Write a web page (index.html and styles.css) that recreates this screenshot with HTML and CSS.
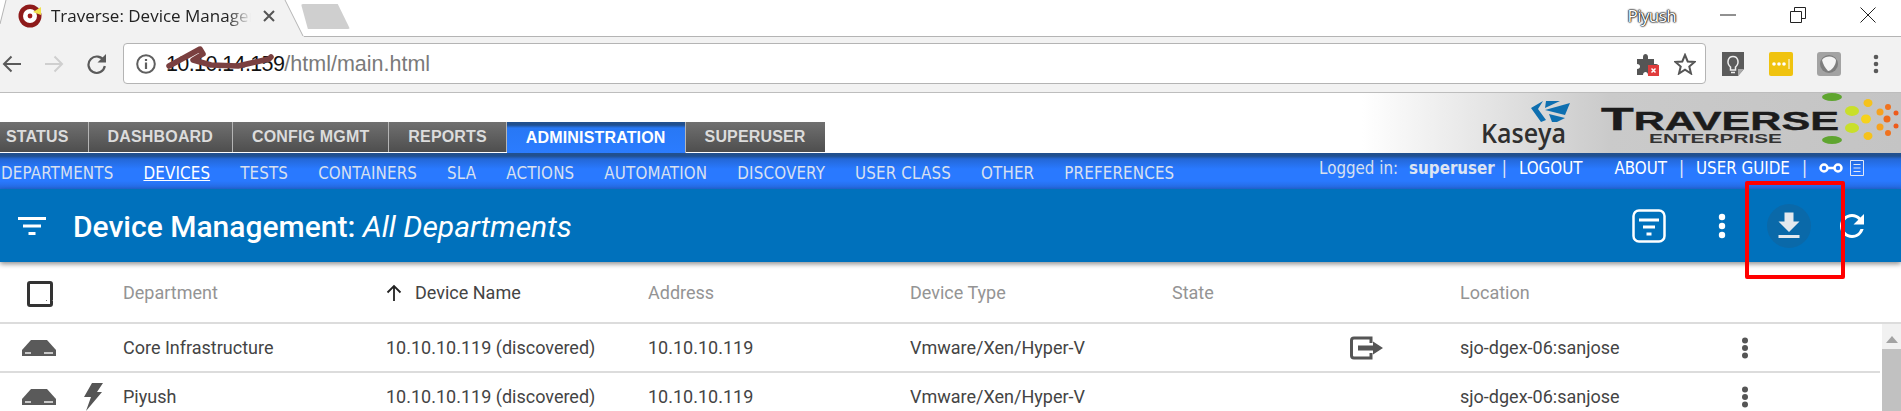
FILE: index.html
```html
<!DOCTYPE html>
<html lang="en">
<head>
<meta charset="utf-8">
<title>Traverse: Device Management</title>
<link rel="stylesheet" href="styles.css">
</head>
<body>
<div class="tabstrip">
  <div class="tab">
    <svg class="tab-shape" width="304" height="37" viewBox="0 0 304 37"><path d="M6 0L0 24V37H304L285 0Z" fill="#f2f2f2"/><path d="M6 0L0 24M285 0L303 36" stroke="#b4b4b4" fill="none"/></svg>
    <svg class="favicon" width="24" height="24" viewBox="0 0 24 24"><circle cx="12" cy="12" r="11.500" fill="#8e1a1a"/><circle cx="12" cy="12" r="7" fill="#fff"/><circle cx="12" cy="12" r="2.400" fill="#a01c1c"/><path d="M15 8L23 3V11Z" fill="#f1e14b"/></svg>
    <span class="tab-title">Traverse: Device Manager</span>
    <svg class="tab-close" width="12" height="12" viewBox="0 0 12 12"><path d="M1 1L11 11M11 1L1 11" stroke="#555" stroke-width="2"/></svg>
  </div>
  <div class="newtab"></div>
  <span class="profile">Piyush</span>
  <div class="winbtn"><svg width="16" height="2" viewBox="0 0 16 2"><path d="M0 1H16" stroke="#222"/></svg></div>
  <div class="winbtn"><svg width="16" height="16" viewBox="0 0 16 16"><path d="M.5 4.500H11.500V15.500H.5ZM4.500 4.500V.5H15.500V11.500H11.500" fill="none" stroke="#222"/></svg></div>
  <div class="winbtn"><svg width="16" height="16" viewBox="0 0 16 16"><path d="M.5 .5L15.500 15.500M15.500 .5L.5 15.500" stroke="#222"/></svg></div>
</div>
<div class="toolbar">
  <svg class="nav-back" width="20" height="18" viewBox="0 0 20 18"><path d="M19 9H2M9.500 1.500L2 9L9.500 16.500" fill="none" stroke="#5a5a5a" stroke-width="2"/></svg>
  <svg class="nav-forward" width="20" height="18" viewBox="0 0 20 18"><path d="M1 9H18M10.500 1.500L18 9L10.500 16.500" fill="none" stroke="#cfcfcf" stroke-width="2"/></svg>
  <svg class="nav-reload" width="21" height="22" viewBox="0 0 21 22"><path d="M18 8A8.200 8.200 0 1 0 18.800 13" fill="none" stroke="#5a5a5a" stroke-width="2.200"/><path d="M20 1V9.500H11.500Z" fill="#5a5a5a"/></svg>
  <div class="omnibox">
    <svg class="info" width="20" height="20" viewBox="0 0 20 20"><circle cx="10" cy="10" r="8.800" fill="none" stroke="#5f5f5f" stroke-width="2"/><path d="M10 8.500V15M10 5V7" stroke="#5f5f5f" stroke-width="2.200"/></svg>
    <span class="url-host">10.10.14.159</span><span class="url-path">/html/main.html</span>
    <svg class="puzzle" width="24" height="24" viewBox="0 0 24 24"><path d="M1 7H7V5C7 1 12 1 12 5V7H18V12H20C23.500 12 23.500 17 20 17H18V23H12C12 19 7 19 7 23H1V17C5 17 5 12 1 12Z" fill="#555"/><rect x="12" y="13" width="11" height="11" fill="#e03c3c"/><path d="M15.500 16.500L19.500 20.500M19.500 16.500L15.500 20.500" stroke="#fff" stroke-width="1.500"/></svg>
    <svg class="star" width="22" height="22" viewBox="0 0 22 22"><path d="M11 2L13.700 8.500L20.500 9L15.300 13.500L17 20.500L11 16.700L5 20.500L6.700 13.500L1.500 9L8.300 8.500Z" fill="none" stroke="#555" stroke-width="2"/></svg>
  </div>
  <svg class="ext ext-first" width="24" height="24" viewBox="0 0 24 24"><path d="M1 0H23V17L17 24H1Z" fill="#5b5b5b"/><path d="M17 24V17H23Z" fill="#aaa"/><path d="M9.500 15C5 11 7 4.500 12 4.500S19 11 14.500 15V18H9.500Z" fill="none" stroke="#eee" stroke-width="1.500"/><path d="M10 20.500H14" stroke="#eee" stroke-width="1.500"/></svg>
  <svg class="ext" width="24" height="24" viewBox="0 0 24 24"><rect width="24" height="24" rx="2" fill="#f0c30f"/><circle cx="5" cy="12" r="1.800" fill="#fff"/><circle cx="10" cy="12" r="1.800" fill="#fff"/><circle cx="15" cy="12" r="1.800" fill="#fff"/><path d="M20 7V17" stroke="#fff"/></svg>
  <svg class="ext" width="24" height="24" viewBox="0 0 24 24"><rect width="24" height="24" rx="3" fill="#a3a3a3"/><circle cx="12" cy="12" r="9" fill="#7e7e7e"/><path d="M5 8C9 3 17 4 19 8C19 14 14 19 11 19C8 16 6 12 5 8Z" fill="#f4f4f4"/></svg>
  <svg class="menu-dots" width="12" height="20" viewBox="0 0 12 20"><circle cx="6" cy="3" r="2.300" fill="#5a5a5a"/><circle cx="6" cy="10" r="2.300" fill="#5a5a5a"/><circle cx="6" cy="17" r="2.300" fill="#5a5a5a"/></svg>
</div>
<div class="masthead">
  <nav class="maintabs">
    <a class="maintab maintab-first">STATUS</a>
    <a class="maintab">DASHBOARD</a>
    <a class="maintab">CONFIG MGMT</a>
    <a class="maintab">REPORTS</a>
    <a class="maintab maintab-active">ADMINISTRATION</a>
    <a class="maintab">SUPERUSER</a>
  </nav>
  <div class="brand">
    <svg width="539" height="60" viewBox="0 0 539 60">
      <path d="M169 15L181 8L176 16L184 27L179 29Z" fill="#0e6fb0"/>
      <path d="M183 17L208 10L203 22L187 18Z" fill="#0e6fb0"/>
      <path d="M187 21L203 25L195 29H190Z" fill="#0e6fb0"/>
      <path d="M184 8H198L183 15Z" fill="#0e6fb0"/>
      <text class="kaseya" x="119" y="50" textLength="85" lengthAdjust="spacingAndGlyphs">Kaseya</text>
      <text class="traverse" x="239" y="37" textLength="238" lengthAdjust="spacingAndGlyphs"><tspan class="traverse-big">T</tspan>RAVERSE</text>
      <text class="enterprise" x="287" y="50" textLength="133" lengthAdjust="spacingAndGlyphs">ENTERPRISE</text>
      <ellipse cx="470" cy="4" rx="10" ry="4" fill="#5fa52f"/>
      <ellipse cx="470" cy="47" rx="10" ry="4" fill="#5fa52f"/>
      <ellipse cx="490" cy="18" rx="7" ry="5" fill="#c9df2a"/>
      <ellipse cx="490" cy="35" rx="7" ry="5" fill="#c9df2a"/>
      <ellipse cx="506" cy="10" rx="4.500" ry="4" fill="#f5c21c"/>
      <ellipse cx="504" cy="26" rx="5" ry="4.500" fill="#f5d21c"/>
      <ellipse cx="506" cy="43" rx="4.500" ry="4" fill="#f5c21c"/>
      <circle cx="518" cy="19" r="3.500" fill="#f6a21e"/>
      <circle cx="518" cy="34" r="3.500" fill="#f6a21e"/>
      <circle cx="526" cy="14" r="3" fill="#f0721e"/>
      <circle cx="525" cy="26" r="3.500" fill="#ee6a1a"/>
      <circle cx="526" cy="40" r="3" fill="#f0721e"/>
      <circle cx="534" cy="20" r="2.500" fill="#ee5a1a"/>
      <circle cx="534" cy="33" r="2.500" fill="#ee5a1a"/>
    </svg>
  </div>
</div>
<div class="subnav">
  <a class="sublink">DEPARTMENTS</a>
  <a class="sublink sublink-current">DEVICES</a>
  <a class="sublink">TESTS</a>
  <a class="sublink">CONTAINERS</a>
  <a class="sublink">SLA</a>
  <a class="sublink">ACTIONS</a>
  <a class="sublink">AUTOMATION</a>
  <a class="sublink">DISCOVERY</a>
  <a class="sublink">USER CLASS</a>
  <a class="sublink">OTHER</a>
  <a class="sublink">PREFERENCES</a>
  <div class="userinfo">
    <span class="logged">Logged in:</span>
    <b class="logged-user">superuser</b>
    <span class="pipe pipe-a">|</span>
    <a class="userlink logout">LOGOUT</a>
    <a class="userlink about">ABOUT</a>
    <span class="pipe pipe-b">|</span>
    <a class="userlink">USER GUIDE</a>
    <span class="pipe pipe-c">|</span>
    <svg class="license" width="26" height="12" viewBox="0 0 26 12"><circle cx="6" cy="6" r="3.500" fill="none" stroke="#fff" stroke-width="2.500"/><circle cx="20" cy="6" r="3.500" fill="none" stroke="#fff" stroke-width="2.500"/><path d="M9 6H17" stroke="#fff" stroke-width="2.500"/></svg>
    <svg class="docicon" width="14" height="16" viewBox="0 0 14 16"><path d="M.5 .5H13.500V15.500H.5ZM3.500 4.500H10.500M3.500 8H10.500M3.500 11.500H10.500" fill="none" stroke="#e2e8f5"/></svg>
  </div>
</div>
<header class="titlebar">
  <svg class="filter-icon" width="28" height="18" viewBox="0 0 28 18"><path d="M0 1.500H28M5 9H23M10.500 16.500H17.500" stroke="#fff" stroke-width="3"/></svg>
  <h1 class="title">Device Management: <em class="title-scope">All Departments</em></h1>
  <div class="actions">
    <svg class="act-box" width="34" height="34" viewBox="0 0 34 34"><rect x="1.500" y="1.500" width="31" height="31" rx="5.500" fill="none" stroke="#fff" stroke-width="2.500"/><path d="M7 11H27M11 18H23M14.500 25H19.500" stroke="#fff" stroke-width="3"/></svg>
    <svg class="act-dots" width="8" height="26" viewBox="0 0 8 26"><circle cx="4" cy="4" r="3.200" fill="#fff"/><circle cx="4" cy="13" r="3.200" fill="#fff"/><circle cx="4" cy="22" r="3.200" fill="#fff"/></svg>
    <div class="act-download"><svg width="36" height="36" viewBox="0 0 24 24"><path d="M19 9h-4V3H9v6H5l7 7 7-7zM5 18v2h14v-2H5z" fill="#e4e9ee"/></svg></div>
    <svg class="act-refresh" width="36" height="36" viewBox="0 0 24 24"><path d="M17.650 6.350A7.958 7.958 0 0 0 12 4c-4.420 0-7.990 3.580-7.990 8s3.570 8 7.990 8c3.730 0 6.840-2.550 7.730-6h-2.080A5.990 5.990 0 0 1 12 18c-3.310 0-6-2.690-6-6s2.690-6 6-6c1.660 0 3.140.69 4.220 1.780L13 11h7V4l-2.350 2.350z" fill="#fff"/></svg>
  </div>
</header>
<div class="grid-head">
  <div class="cell-check"><span class="checkbox"></span></div>
  <div class="col-h">Department</div>
  <div class="col-h col-sorted"><svg class="sort" width="16" height="18" viewBox="0 0 16 18"><path d="M8 17V2M1.500 8.500L8 2L14.500 8.500" fill="none" stroke="#222" stroke-width="1.800"/></svg>Device Name</div>
  <div class="col-h">Address</div>
  <div class="col-h">Device Type</div>
  <div class="col-h">State</div>
  <div></div>
  <div class="col-h">Location</div>
  <div></div>
</div>
<div class="grid-body">
  <div class="rows">
    <div class="row">
      <div class="cell-icons"><svg width="34" height="16" viewBox="0 0 34 16"><path d="M9 0H25L34 10V16H0V10Z" fill="#5a5a5a"/><path d="M3 13H9M22 13H31" stroke="#eee" stroke-width="1.500"/></svg></div>
      <div>Core Infrastructure</div>
      <div>10.10.10.119 (discovered)</div>
      <div>10.10.10.119</div>
      <div>Vmware/Xen/Hyper-V</div>
      <div></div>
      <div><svg class="export" width="33" height="24" viewBox="0 0 33 24"><path d="M21 7V2H4Q1.500 2 1.500 4.500V19.500Q1.500 22 4 22H21V17" fill="none" stroke="#555" stroke-width="3"/><path d="M8 9.500H23V5.500L33 12L23 18.500V14.500H8Z" fill="#555"/></svg></div>
      <div>sjo-dgex-06:sanjose</div>
      <div><svg class="kebab" width="8" height="22" viewBox="0 0 8 22"><circle cx="4" cy="3.500" r="3" fill="#555"/><circle cx="4" cy="11" r="3" fill="#555"/><circle cx="4" cy="18.500" r="3" fill="#555"/></svg></div>
    </div>
    <div class="row">
      <div class="cell-icons"><svg width="34" height="16" viewBox="0 0 34 16"><path d="M9 0H25L34 10V16H0V10Z" fill="#5a5a5a"/><path d="M3 13H9M22 13H31" stroke="#eee" stroke-width="1.500"/></svg><svg class="bolt" width="19" height="28" viewBox="0 0 19 28"><path d="M8 0H19L13 9H18L2 28L7 14H0Z" fill="#555"/></svg></div>
      <div>Piyush</div>
      <div>10.10.10.119 (discovered)</div>
      <div>10.10.10.119</div>
      <div>Vmware/Xen/Hyper-V</div>
      <div></div>
      <div></div>
      <div>sjo-dgex-06:sanjose</div>
      <div><svg class="kebab" width="8" height="22" viewBox="0 0 8 22"><circle cx="4" cy="3.500" r="3" fill="#555"/><circle cx="4" cy="11" r="3" fill="#555"/><circle cx="4" cy="18.500" r="3" fill="#555"/></svg></div>
    </div>
  </div>
  <div class="scrollbar">
    <div class="scroll-up"></div>
    <div class="scroll-thumb"></div>
  </div>
</div>
<svg class="scribble" width="120" height="30" viewBox="0 0 120 30"><path d="M6 21L37 4L40 9L30 15L48 20L75 21L106 14L108 12" fill="none" stroke="#7a4040" stroke-width="5.500" stroke-linejoin="round" stroke-linecap="round"/></svg>
<div class="callout"></div>
</body>
</html>
```
FILE: styles.css
```css
* { box-sizing: border-box; }
html, body { margin: 0; padding: 0; }
body {
  width: 1901px;
  height: 411px;
  overflow: hidden;
  position: relative;
  background: #fff;
  font-family: "Roboto", "Liberation Sans", sans-serif;
}

/* browser chrome */
.tabstrip {
  height: 37px;
  display: flex;
  align-items: flex-start;
  background: #fff;
  border-bottom: 1px solid #b4b4b4;
}
.tab {
  position: relative;
  width: 304px;
  height: 37px;
  flex: none;
  display: flex;
  align-items: center;
  padding: 0 0 6px 18px;
}
.tab-shape { position: absolute; left: 0; top: 0; }
.favicon { position: relative; flex: none; }
.tab-title {
  position: relative;
  margin-left: 9px;
  width: 200px;
  flex: none;
  white-space: nowrap;
  overflow: hidden;
  font: 17px "Open Sans", "Liberation Sans", sans-serif;
  color: #222;
  -webkit-mask-image: linear-gradient(90deg, #000 88%, transparent 100%);
  mask-image: linear-gradient(90deg, #000 88%, transparent 100%);
}
.tab-close { position: relative; margin-left: 12px; flex: none; }
.newtab {
  width: 49px;
  height: 25px;
  margin: 4px 0 0 -3px;
  background: #cfcfcf;
  border-radius: 2px;
  clip-path: polygon(0 0, 75% 0, 100% 100%, 14% 100%);
}
.profile {
  margin: 4px 17px 0 auto;
  font: 17px "Open Sans", "Liberation Sans", sans-serif;
  letter-spacing: -0.6px;
  color: #fff;
  text-shadow: 0 0 2px #111, 0 0 2px #111, 0 0 1px #111, 0 0 1px #111;
}
.winbtn {
  width: 70px;
  height: 30px;
  display: flex;
  align-items: center;
  justify-content: center;
  flex: none;
}
.winbtn:last-child { margin-right: -2px; }

.toolbar {
  height: 56px;
  display: flex;
  align-items: center;
  padding: 0 0 2px 2px;
  background: #f2f2f2;
  border-bottom: 1px solid #bdbdbd;
}
.nav-forward, .nav-reload { margin-left: 22px; }
.omnibox {
  width: 1583px;
  height: 41px;
  margin-left: 16px;
  flex: none;
  display: flex;
  align-items: center;
  padding: 0 9px 0 12px;
  background: #fff;
  border: 1px solid #b4b4b4;
  border-radius: 4px;
  font: 21.500px "Liberation Sans", sans-serif;
}
.info { margin-right: 10px; flex: none; }
.url-host { color: #111; letter-spacing: -0.6px; margin-top: 2px; }
.url-path { color: #7a7a7a; margin-top: 2px; }
.puzzle { margin-left: auto; }
.star { margin-left: 14px; }
.ext { margin-left: 24px; flex: none; }
.ext-first { margin-left: 15px; }
.menu-dots { margin-left: 29px; }

/* masthead */
.masthead {
  height: 60px;
  display: flex;
  justify-content: space-between;
  align-items: flex-end;
}
.maintabs { display: flex; align-items: flex-end; }
.maintab {
  height: 30px;
  margin-bottom: 1px;
  padding: 0 19px;
  border-right: 1px solid #b5b5b5;
  display: flex;
  align-items: center;
  background: linear-gradient(#707070, #4e4e4e);
  font: bold 16px "Liberation Sans", sans-serif;
  letter-spacing: .16px;
  color: #dcdcdc;
  white-space: nowrap;
}
.maintab-first { padding-left: 6px; }
.maintab-active {
  height: 31px;
  margin-bottom: 0;
  color: #fff;
  background: linear-gradient(#21508f 0, #21508f 3px, #2878f5 6px, #2b7cff);
}
.maintab:last-child { border-right: 0; }
.brand {
  width: 539px;
  height: 60px;
  background: linear-gradient(90deg, #fff 0, #cacaca 46%, #c4c4c4 100%);
}
.brand svg { display: block; }
.kaseya { font: 600 27px "Open Sans", "Liberation Sans", sans-serif; fill: #2f2f2f; }
.traverse { font: bold 25px "Liberation Sans", sans-serif; fill: #1c1c1c; stroke: #1c1c1c; stroke-width: .4px; }
.traverse-big { font-size: 31px; }
.enterprise { font: bold 13px "Liberation Sans", sans-serif; fill: #333; }

/* sub navigation */
.subnav {
  height: 36px;
  display: flex;
  align-items: center;
  gap: 30px;
  padding: 4px 0 0 1px;
  background: linear-gradient(#21508f 0, #21508f 3px, #2468d8 6px, #2979ff 16px, #2979ff 28px, #2468dc 36px);
  font: 16.800px "DejaVu Sans Condensed", "DejaVu Sans", sans-serif;
  font-stretch: condensed;
  color: #d8e0ef;
  white-space: nowrap;
}
.sublink { letter-spacing: .16px; }
.sublink-current { color: #fff; text-decoration: underline; }
.userinfo {
  margin-left: auto;
  margin-right: 37px;
  margin-top: -10px;
  display: flex;
  align-items: center;
  color: #fff;
}
.logged { color: #d8e0ef; }
.logged-user { margin-left: 11px; color: #dde4f2; }
.pipe { color: #e6ebf6; }
.pipe-a { margin-left: 7px; }
.logout { margin-left: 12px; }
.about { margin-left: 32px; }
.pipe-b { margin: 0 12px; }
.pipe-c { margin: 0 11px 0 12px; }
.docicon { margin-left: 6px; }

/* title bar */
.titlebar {
  position: relative;
  height: 73px;
  display: flex;
  align-items: center;
  padding: 0 31px 0 18px;
  background: #0071bc;
  box-shadow: 0 2px 5px rgba(0, 0, 0, .45);
}
.title {
  margin: 2px 0 0 27px;
  font: 500 30px "Roboto", sans-serif;
  color: #fff;
}
.title-scope { font-weight: 400; font-style: italic; }
.actions { margin-left: auto; display: flex; align-items: center; }
.act-dots { margin-left: 52px; }
.act-download {
  width: 44px;
  height: 44px;
  margin-left: 41px;
  display: flex;
  align-items: center;
  justify-content: center;
  border-radius: 50%;
  background: #0a69a9;
}
.act-refresh { margin-left: 23px; }

/* grid */
.grid-head, .row {
  display: grid;
  grid-template-columns: 123px 263px 262px 262px 262px 178px 110px 281px 1fr;
  align-items: center;
  font-size: 18px;
}
.grid-head {
  height: 62px;
  border-bottom: 2px solid #dcdcdc;
  padding-top: 1px;
}
.col-h { color: #949494; white-space: nowrap; }
.col-sorted { display: flex; align-items: center; gap: 13px; color: #444; }
.cell-check { padding: 2px 0 0 27px; display: flex; }
.checkbox {
  position: relative;
  width: 26px;
  height: 26px;
  border: 3px solid #333;
  border-radius: 3px;
}
.checkbox::after {
  content: "";
  position: absolute;
  right: -3px;
  bottom: 3px;
  width: 7px;
  height: 1px;
  background: repeating-linear-gradient(90deg, #777 0 1px, transparent 1px 6px);
}
.grid-body { display: flex; height: 87px; }
.rows { width: 1880px; flex: none; }
.row {
  height: 47px;
  color: #444;
  white-space: nowrap;
}
.row + .row { height: 49px; border-top: 2px solid #dcdcdc; }
.row svg { display: block; }
.cell-icons { display: flex; align-items: center; padding-left: 22px; }
.bolt { margin-left: 28px; }
.scrollbar {
  flex: 1;
  margin-left: 2px;
  background: #f1f1f1;
  display: flex;
  flex-direction: column;
}
.scroll-up {
  height: 25px;
  flex: none;
  display: flex;
  justify-content: center;
}
.scroll-up::before {
  content: "";
  margin-top: 12px;
  width: 0;
  height: 0;
  border-left: 6px solid transparent;
  border-right: 6px solid transparent;
  border-bottom: 7px solid #a3a3a3;
}
.scroll-thumb { flex: 1; background: #c1c1c1; }

/* overlays */
.callout {
  position: absolute;
  left: 1745px;
  top: 181px;
  width: 100px;
  height: 98px;
  border: 4px solid #f00;
  border-radius: 2px;
}
.scribble { position: absolute; left: 163px; top: 45px; }
```
